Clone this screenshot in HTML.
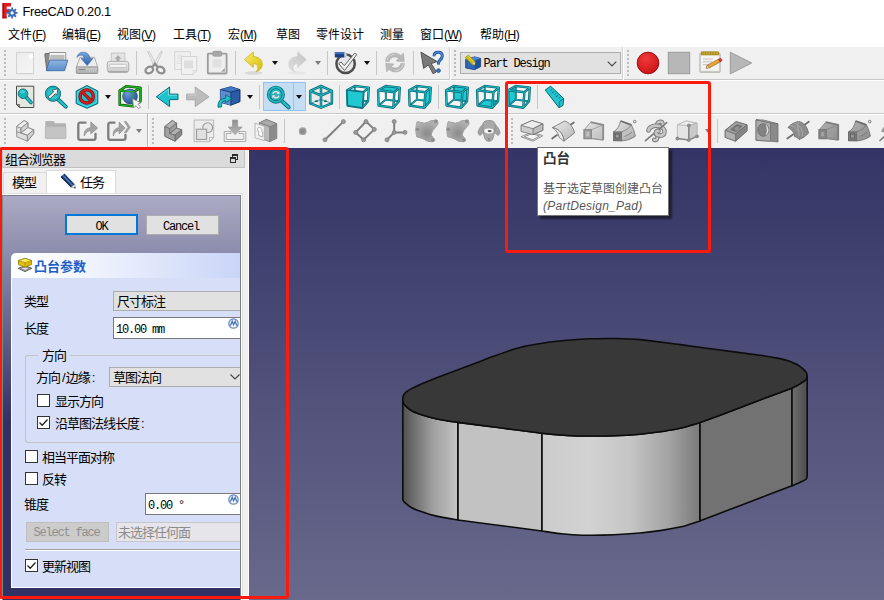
<!DOCTYPE html>
<html lang="zh-CN">
<head>
<meta charset="utf-8">
<title>FreeCAD 0.20.1</title>
<style>
*{box-sizing:border-box;margin:0;padding:0}
html,body{width:884px;height:600px;overflow:hidden;background:#f0f0f0}
body{position:relative;font-family:"Liberation Sans","Noto Sans CJK SC",sans-serif;font-size:12px;color:#000}
.abs{position:absolute}
#title{left:0;top:0;width:884px;height:24px;background:#fff}
#title .t{position:absolute;left:22.500px;top:4px;font-size:12.800px;line-height:16px;letter-spacing:-0.3px;white-space:nowrap}
#menu{left:0;top:24px;width:884px;height:22px;background:#fff}
#menu span{position:absolute;top:3px;font-size:12px;line-height:17px;white-space:nowrap}
#menu u{text-decoration:underline;text-underline-offset:1px}
#menu i{font-style:normal;letter-spacing:-0.5px}
.tbline{left:0;width:884px;height:1px}
.handle{position:absolute;width:2px;background-image:repeating-linear-gradient(to bottom,#bcbcbc 0,#bcbcbc 2px,transparent 2px,transparent 4px)}
.sep{position:absolute;width:1px;background:#c6c6c6}
.ic{position:absolute;overflow:visible}
.dd{position:absolute;width:0;height:0;border-left:3.8px solid transparent;border-right:3.8px solid transparent;border-top:4.3px solid #111}
.dd.g{border-top-color:#7a7a7a}
.mono{font-family:"Liberation Mono","Noto Sans CJK SC",monospace}
.cjk{font-family:"Liberation Sans","Noto Sans CJK SC",sans-serif}
#view{left:249px;top:148px;width:635px;height:452px;background:linear-gradient(to bottom,#343466 0%,#69698c 100%)}
#dockhead{left:3px;top:150px;width:242px;height:18px;background:#d9d9d9}
.lbl{position:absolute;font-size:12px;line-height:14px;white-space:nowrap;color:#000}
#dock .lbl{font-size:13px;letter-spacing:-1px}
.cb{position:absolute;width:13px;height:13px;background:#fff;border:1px solid #333}
.red{position:absolute;border:3px solid #fa1a0e;border-radius:3px;pointer-events:none}
</style>
</head>
<body>
<!-- title bar -->
<div id="title" class="abs">
<svg class="ic" style="left:2px;top:2px" width="18" height="18" viewBox="0 0 18 18">
<path d="M.500 1h8.500v3.600H4.700v2.600h3.500v3.300H4.700v5.800H.5z" fill="#e01b22"/>
<path d="M.500 1h1.500v15.300H.5z" fill="#9c1016"/>
<path d="M.500 14.800h4.200v1.500H.5z" fill="#b0141a"/>
<g fill="#3a6eb5"><circle cx="10.100" cy="10.900" r="3.700"/><path d="M9.200 5.400h1.800v11H9.200z"/><path d="M4.600 10h11v1.800h-11z"/><path d="M5.600 7.700l1.300-1.300 7.700 7.700-1.300 1.300z"/><path d="M13.300 6.400l1.300 1.300-7.700 7.700-1.300-1.300z"/></g>
<circle cx="10.100" cy="10.900" r="1.600" fill="#fff"/>
</svg>
<span class="t">FreeCAD 0.20.1</span>
</div>
<!-- menu bar -->
<div id="menu" class="abs">
<span style="left:8px">文件<i>(<u>F</u>)</i></span>
<span style="left:62px">编辑<i>(<u>E</u>)</i></span>
<span style="left:117px">视图<i>(<u>V</u>)</i></span>
<span style="left:173px">工具<i>(<u>T</u>)</i></span>
<span style="left:228px">宏<i>(<u>M</u>)</i></span>
<span style="left:276px">草图</span>
<span style="left:316px">零件设计</span>
<span style="left:380px">测量</span>
<span style="left:420px">窗口<i>(<u>W</u>)</i></span>
<span style="left:480px">帮助<i>(<u>H</u>)</i></span>
</div>
<!-- toolbar area -->
<div class="abs tbline" style="top:46px;background:#fff"></div>
<div class="abs tbline" style="top:79px;background:#c8c8c8"></div>
<div class="abs tbline" style="top:80px;background:#fff"></div>
<div class="abs tbline" style="top:113px;background:#c8c8c8"></div>
<div class="abs tbline" style="top:114px;background:#fff"></div>
<!-- toolbars -->
<div class="handle" style="left:4px;top:50px;height:26px"></div>
<div class="sep" style="left:136px;top:51px;height:24px"></div>
<div class="sep" style="left:235px;top:51px;height:24px"></div>
<div class="sep" style="left:327px;top:51px;height:24px"></div>
<div class="sep" style="left:376px;top:51px;height:24px"></div>
<div class="sep" style="left:413px;top:51px;height:24px"></div>
<div class="dd" style="left:272px;top:61px"></div>
<div class="dd g" style="left:315px;top:61px"></div>
<div class="dd" style="left:364px;top:61px"></div>
<div class="abs" style="left:449px;top:47px;width:1px;height:33px;background:#d0d0d0"></div><div class="abs" style="left:450px;top:47px;width:1px;height:33px;background:#fff"></div>
<div class="handle" style="left:454px;top:50px;height:26px"></div>
<div class="abs" style="left:460px;top:52px;width:161px;height:22px;background:#e1e1e1;border:1px solid #adadad"></div>
<svg class="ic" style="left:465px;top:55px" width="16" height="16" viewBox="0 0 16 16">
<path d="M.600 4.500l9-2.700 6 1.600v8.300L9.500 14.700.6 13z" fill="#2f67b5" stroke="#17386b" stroke-width=".7" stroke-linejoin="round"/>
<path d="M.600 4.500l9 1.300 6-2.400-6-1.600z" fill="#4b86d3"/>
<path d="M9.600 5.800v8.900l6-3V3.400z" fill="#1f4f96"/>
<path d="M.300 2.500L3.300 0l6.900 6.800-.4 2.900-2.900-.4z" fill="#e6cd1f" stroke="#8c7a08" stroke-width=".6"/><path d="M1.800 1.200l6.800 6.900M.9 2l6.800 6.900" stroke="#a8930c" stroke-width=".5"/>
<path d="M6.900 9.300l2.900.4.400-2.900z" fill="#f6f6f6" stroke="#8c7a08" stroke-width=".4"/>
</svg>
<span class="lbl mono" style="left:483.500px;top:57px;font-size:12px;letter-spacing:-1.2px;line-height:14px">Part Design</span>
<svg class="ic" style="left:607px;top:61px" width="10" height="6" viewBox="0 0 10 6"><path d="M.7.600l4.300 4.300L9.300.6" fill="none" stroke="#444" stroke-width="1.100"/></svg>
<div class="abs" style="left:622px;top:47px;width:1px;height:33px;background:#d0d0d0"></div><div class="abs" style="left:623px;top:47px;width:1px;height:33px;background:#fff"></div>
<div class="handle" style="left:627px;top:50px;height:26px"></div>
<svg class="ic" style="left:636px;top:51px" width="24" height="24" viewBox="0 0 24 24"><defs><radialGradient id="rc" cx=".4" cy=".3" r=".8"><stop offset="0" stop-color="#f03a3a"/><stop offset="1" stop-color="#c90f14"/></radialGradient></defs><circle cx="12" cy="12" r="10.800" fill="url(#rc)" stroke="#9c0c10" stroke-width="1"/></svg>
<svg class="ic" style="left:667px;top:51px" width="24" height="24" viewBox="0 0 24 24"><rect x="1.300" y="1.300" width="21.400" height="21.400" fill="#b7b7b7" stroke="#9a9a9a" stroke-width="1"/></svg>
<svg class="ic" style="left:698px;top:51px" width="24" height="24" viewBox="0 0 24 24">
<rect x="2" y="2.200" width="20" height="19.300" rx="1" fill="#f4f4f2" stroke="#9a9a96" stroke-width=".9"/>
<rect x="2" y="19.800" width="20" height="2" fill="#c9c9c4"/>
<rect x="3.200" y=".8" width="17.600" height="3.200" fill="#c8a62a" stroke="#8c741a" stroke-width=".5"/>
<path d="M5 .8v3.200M7.500.8v3.200M10 .8v3.200M12.500.8v3.200M15 .8v3.200M17.500.8v3.200" stroke="#8c741a" stroke-width=".5"/>
<path d="M5 8h10M5 10.800h9M5 13.600h6" stroke="#bdbdbd" stroke-width=".9"/>
<path d="M8.200 17.200l1.200-3.200 11-5.800 1.900 2.700-10.800 5.900z" fill="#e9a13a" stroke="#9a5f14" stroke-width=".6" stroke-linejoin="round"/>
<path d="M20.400 8.200l1.900 2.700 1.300-.8c.5-.3.500-.9.200-1.400l-.6-.9c-.3-.5-.9-.6-1.400-.3z" fill="#d9383a" stroke="#8c1a1a" stroke-width=".5"/>
<path d="M8.200 17.200l1.200-3.200 2.100 2.800z" fill="#e8d2a8" stroke="#7a5a2a" stroke-width=".4"/>
</svg>
<svg class="ic" style="left:729px;top:51px" width="24" height="24" viewBox="0 0 24 24"><path d="M1.300 1.200L22.600 12 1.300 22.800z" fill="#b7b7b7" stroke="#9a9a9a" stroke-width="1" stroke-linejoin="round"/></svg>
<svg class="ic" style="left:13px;top:51px" width="24" height="24" viewBox="0 0 24 24"><defs><linearGradient id="nd" x1="0" y1="0" x2="1" y2="1"><stop offset="0" stop-color="#ececec"/><stop offset="1" stop-color="#f6f6f6"/></linearGradient></defs>
<rect x="3.5" y="22" width="17" height="1.200" fill="#c9c9c9"/>
<rect x="3.500" y="1.500" width="17" height="21" fill="url(#nd)" stroke="#d2d2d2"/>
<circle cx="18" cy="5.500" r="2.200" fill="#fff"/></svg>
<svg class="ic" style="left:44px;top:51px" width="24" height="24" viewBox="0 0 24 24"><defs><linearGradient id="of" x1="0" y1="0" x2="0" y2="1"><stop offset="0" stop-color="#8fb5e0"/><stop offset="1" stop-color="#5b8ecb"/></linearGradient></defs>
<path d="M.800 3.500c0-.700.400-1 1-1h3.500l.800 1v16H2.800z" fill="#8a8a8a" stroke="#5c5c5c" stroke-width=".8"/>
<path d="M5.300 1.500h16.400v11H4.500z" fill="#fdfdfd" stroke="#7a7a7a" stroke-width=".8"/>
<path d="M6.500 4h14v5h-15z" fill="#bdbdbd"/>
<path d="M7 3.200h13" stroke="#e8e8e8" stroke-width="1"/>
<path d="M5.600 9.200h18.200l-3.200 10.500H2.300z" fill="url(#of)" stroke="#3f70ad" stroke-width=".9" stroke-linejoin="round"/></svg>
<svg class="ic" style="left:75px;top:51px" width="24" height="24" viewBox="0 0 24 24"><defs><linearGradient id="sv" x1="0" y1="0" x2="0" y2="1"><stop offset="0" stop-color="#d0d0d0"/><stop offset="1" stop-color="#a9a9a9"/></linearGradient>
<linearGradient id="sa" x1="0" y1="0" x2="0" y2="1"><stop offset="0" stop-color="#79a7dc"/><stop offset="1" stop-color="#2a61ad"/></linearGradient></defs>
<path d="M5 6.300h14.400l3.400 9.800H1.300z" fill="#ededed" stroke="#a5a5a5" stroke-width=".9" stroke-linejoin="round"/>
<rect x="1.300" y="16" width="21.500" height="6.500" rx="1" fill="url(#sv)" stroke="#8f8f8f" stroke-width=".9"/>
<path d="M3.500 18.500h7" stroke="#8a8a8a" stroke-width="1.300"/>
<path d="M14.500 17.500v3.500M16.500 17.500v3.500M18.500 17.500v3.500M20.500 17.500v3.500" stroke="#c4c4c4" stroke-width=".9"/>
<path d="M2 6.500C2.500 2.500 6 .700 9.500 1.300c3.500.600 5.300 3.300 5.600 6.200H18L12.200 14.600 6 7.500h3.300C9 5.600 8 4.300 6.200 4.200 4.500 4.100 3 5 2 6.500z" fill="url(#sa)" stroke="#2c5fa5" stroke-width=".5" stroke-linejoin="round"/></svg>
<svg class="ic" style="left:106px;top:51px" width="24" height="24" viewBox="0 0 24 24"><defs><linearGradient id="pr" x1="0" y1="0" x2="0" y2="1"><stop offset="0" stop-color="#ededed"/><stop offset="1" stop-color="#c9c9c9"/></linearGradient></defs>
<rect x="5.300" y="2" width="13.600" height="9.500" fill="#e4e4e4" stroke="#c4c4c4" stroke-width=".9"/>
<path d="M12 4.200l3.400 3.600h-1.900v3h-3v-3H8.600z" fill="#a9a9a9"/>
<rect x="1.300" y="10.300" width="21.500" height="11" rx="2.600" fill="url(#pr)" stroke="#a8a8a8" stroke-width=".9"/>
<rect x="3.500" y="13.300" width="17" height="3.200" rx="1.200" fill="#f4f4f4" stroke="#b5b5b5" stroke-width=".7"/>
<path d="M2.500 20.800h19" stroke="#a0a0a0" stroke-width="1.200"/></svg>
<svg class="ic" style="left:143px;top:51px" width="24" height="24" viewBox="0 0 24 24"><path d="M4.600.500L6.200.500 13.500 13.800 11.200 15.200z" fill="#ececec" stroke="#bdbdbd" stroke-width=".7"/>
<path d="M19.400.500L17.800.500 10.500 13.800 12.800 15.200z" fill="#ececec" stroke="#bdbdbd" stroke-width=".7"/>
<ellipse cx="6.300" cy="19" rx="4" ry="3.100" transform="rotate(-28 6.300 19)" fill="none" stroke="#8f8f8f" stroke-width="2.300"/>
<ellipse cx="17.700" cy="19" rx="4" ry="3.100" transform="rotate(28 17.700 19)" fill="none" stroke="#8f8f8f" stroke-width="2.300"/>
<path d="M9.300 16l2.700-3.500 2.700 3.500" fill="none" stroke="#8f8f8f" stroke-width="2.200"/></svg>
<svg class="ic" style="left:174px;top:51px" width="24" height="24" viewBox="0 0 24 24"><rect x=".700" y=".700" width="15.600" height="17.800" fill="#efefef" stroke="#d3d3d3" stroke-width=".9"/>
<path d="M3 5h6M3 7.500h5M3 10h5M3 12.500h5" stroke="#dcdcdc" stroke-width=".9"/>
<path d="M7.500 5.500h15.300v14.200l-3.800 3.800H7.500z" fill="#f1f1f1" stroke="#cfcfcf" stroke-width=".9"/>
<path d="M10 9.500h9v8h-9z" fill="#dedede"/>
<path d="M22.800 19.700h-3.800v3.800z" fill="#fbfbfb" stroke="#c9c9c9" stroke-width=".7"/></svg>
<svg class="ic" style="left:205px;top:51px" width="24" height="24" viewBox="0 0 24 24"><rect x="2.800" y="2.700" width="18.800" height="19.800" rx=".8" fill="#ececec" stroke="#9d9d9d" stroke-width="1.800"/>
<rect x="5.500" y="5.500" width="13.400" height="14.500" fill="#efefef"/>
<path d="M7.500 8h9v8.500h-9z" fill="#e1e1e1"/>
<rect x="7.800" y=".3" width="8.800" height="5" rx="1.200" fill="#a9a9a9" stroke="#8f8f8f" stroke-width=".6"/>
<rect x="10" y="0" width="4.400" height="1.600" rx=".8" fill="#9a9a9a"/>
<path d="M19.800 17v3.800H16z" fill="#a4a4a4"/></svg>
<svg class="ic" style="left:241px;top:51px" width="24" height="24" viewBox="0 0 24 24"><defs><linearGradient id="un" x1="0" y1="0" x2="1" y2="1"><stop offset="0" stop-color="#f7ec72"/><stop offset="1" stop-color="#d9bd00"/></linearGradient></defs>
<ellipse cx="12.500" cy="22" rx="9" ry="1.800" fill="#d9d9d9"/>
<path d="M3.500 8.600L12.300.900v4.600c5.200.200 8.900 3.300 8.900 7.800 0 3.700-2.800 6.700-6.300 7.500 1.600-1.400 2.300-3 2-4.800-.400-2.200-2.100-3.400-4.600-3.500v4z" fill="url(#un)" stroke="#c9ae00" stroke-width=".7" stroke-linejoin="round"/></svg>
<svg class="ic" style="left:285px;top:51px" width="24" height="24" viewBox="0 0 24 24"><defs><linearGradient id="re" x1="1" y1="0" x2="0" y2="1"><stop offset="0" stop-color="#c4c4c4"/><stop offset="1" stop-color="#dedede"/></linearGradient></defs>
<ellipse cx="11.500" cy="22" rx="9" ry="1.600" fill="#e6e6e6"/>
<path d="M21.500 8.600L12.700.900v4.600C7.500 5.700 3.800 8.800 3.800 13.300c0 3.700 2.800 6.700 6.300 7.500-1.600-1.400-2.300-3-2-4.800.400-2.200 2.100-3.400 4.600-3.500v4z" fill="url(#re)" stroke="#cdcdcd" stroke-width=".6" stroke-linejoin="round"/></svg>
<svg class="ic" style="left:334px;top:51px" width="25" height="24" viewBox="0 0 25 24"><circle cx="11.600" cy="12.800" r="9.200" fill="#e6e6e6" stroke="#4d4d4d" stroke-width="2.500"/>
<path d="M4.800 12.600l2.300-1.600 3.200 3.700L20.600 2.200l2.200 1.300L10.500 19.500z" fill="#f2f2f2" stroke="#555" stroke-width=".9" stroke-linejoin="round"/>
<path d="M.800 1.200h9.500l3.700 2.700-3.700 2.700H.800z" fill="#1c3f82"/>
<path d="M.800 2.400h9.800" stroke="#3d72c4" stroke-width="1.400"/>
<path d="M10.300 1.200l3.700 2.700-3.700 2.700z" fill="#d8dbe2"/>
<path d="M12.800 3l1.200.900-1.200.900z" fill="#222"/></svg>
<svg class="ic" style="left:383px;top:51px" width="24" height="24" viewBox="0 0 24 24"><g fill="#b9b9b9" stroke="#a9a9a9" stroke-width=".5" stroke-linejoin="round">
<path d="M2.500 10.500C2.800 5.500 6.500 2 11.500 2c2.600 0 4.800 1 6.400 2.600L20.500 2l.8 8.800-8.300-.8 2.600-2.600C14.500 6.500 13.100 6 11.600 6 8.800 6 6.800 7.900 6.300 10.500z"/>
<path d="M21.500 12.500c-.3 5-4 8.500-9 8.500-2.600 0-4.800-1-6.400-2.600L3.500 21l-.8-8.800 8.300.8-2.600 2.600c1.100.9 2.500 1.400 4 1.400 2.800 0 4.800-1.900 5.300-4.500z"/></g>
<path d="M4 9.500C5 5.500 8 3.500 11.500 3.500M20 13.500c-1 4-4 6-7.500 6" fill="none" stroke="#d6d6d6" stroke-width="1"/></svg>
<svg class="ic" style="left:420px;top:51px" width="24" height="24" viewBox="0 0 24 24"><path d="M.900 1.100L3.600 17.400 8.400 14 13.100 22.800 16.500 20.800 11.100 12.600 17.200 10.600z" fill="#7a7a7a" stroke="#4a4a4a" stroke-width=".9" stroke-linejoin="round"/>
<path d="M14 5.200C14 2.600 15.800 1.300 18.200 1.300s4.100 1.500 4.100 3.800c0 1.900-1 2.900-2.200 3.900-1.100.900-1.600 1.600-1.600 3.100v1.500" fill="none" stroke="#20529c" stroke-width="3"/>
<path d="M14 5.200C14 2.600 15.800 1.300 18.200 1.300s4.100 1.500 4.100 3.800c0 1.900-1 2.900-2.200 3.900-1.100.900-1.600 1.600-1.600 3.100v1.500" fill="none" stroke="#4a86d2" stroke-width="1.500"/>
<circle cx="18.500" cy="19.600" r="1.900" fill="#3b74c0" stroke="#1f4f96" stroke-width=".8"/></svg>
<div class="handle" style="left:4px;top:84px;height:26px"></div>
<div class="sep" style="left:148px;top:85px;height:24px"></div>
<div class="sep" style="left:259px;top:85px;height:24px"></div>
<div class="sep" style="left:339px;top:85px;height:24px"></div>
<div class="sep" style="left:438px;top:85px;height:24px"></div>
<div class="sep" style="left:537px;top:85px;height:24px"></div>
<div class="dd" style="left:105px;top:95px"></div>
<div class="dd" style="left:247px;top:95px"></div>
<div class="abs" style="left:263px;top:82px;width:43px;height:29px;background:#c5ddf3;border:1px solid #8fc4f4"></div><div class="abs" style="left:293px;top:83px;width:1px;height:27px;background:#8fc4f4"></div>
<div class="dd" style="left:296px;top:95px"></div>
<svg class="ic" style="left:13px;top:85px" width="24" height="24" viewBox="0 0 24 24"><path d="M3.500 1.200h17.300v21.300H6.500l-3-3z" fill="#e4e7e0" stroke="#3c3c3c" stroke-width=".9" stroke-linejoin="round"/>
<path d="M3.500 19.500h3v3z" fill="#8a8a8a" stroke="#3c3c3c" stroke-width=".6"/>
<path d="M13 12l5 5.500" stroke="#0a6973" stroke-width="3.600" stroke-linecap="round"/>
<path d="M13 12l5 5.500" stroke="#22c3cf" stroke-width="1.900" stroke-linecap="round"/>
<circle cx="10" cy="8.700" r="4.800" fill="#18b3bf" stroke="#0a6973" stroke-width=".9"/>
<ellipse cx="9.300" cy="6.800" rx="2.800" ry="1.700" fill="#5fd6de" opacity=".7"/></svg>
<svg class="ic" style="left:44px;top:85px" width="24" height="24" viewBox="0 0 24 24"><path d="M14.500 14.800l7.300 6.800" stroke="#0a6973" stroke-width="4" stroke-linecap="round"/>
<path d="M14.500 14.800l7.300 6.800" stroke="#22c3cf" stroke-width="2.200" stroke-linecap="round"/>
<circle cx="9" cy="8.700" r="7.600" fill="#2ac4ce" stroke="#0a6973" stroke-width="1"/>
<circle cx="9" cy="8.700" r="6.300" fill="none" stroke="#14a5b0" stroke-width="1"/>
<path d="M13.800 3.700L8 5.300l1.700 1.500-5.500 5 1.800 1.900 5.400-5 1.500 1.600z" fill="#f4f4f4" stroke="#444" stroke-width=".8" stroke-linejoin="round"/></svg>
<svg class="ic" style="left:75px;top:85px" width="24" height="24" viewBox="0 0 24 24"><path d="M12 .500l10.800 5.500v12.500L12 23.300 1.200 18.500V6z" fill="#1ac3d0" stroke="#0a6973" stroke-width="1" stroke-linejoin="round"/>
<path d="M12 2.200l9.300 4.700v10.700L12 21.700l-9.300-4.100V6.900z" fill="none" stroke="#6fe0e8" stroke-width=".7"/>
<circle cx="11.700" cy="11.400" r="6.600" fill="none" stroke="#8e0c0c" stroke-width="3.300"/>
<circle cx="11.700" cy="11.400" r="6.600" fill="none" stroke="#d61c1c" stroke-width="2.100"/>
<path d="M7.200 6.800l9.200 9.200" stroke="#8e0c0c" stroke-width="3.300"/>
<path d="M7.200 6.800l9.200 9.200" stroke="#d61c1c" stroke-width="2.100"/></svg>
<svg class="ic" style="left:118px;top:85px" width="25" height="24" viewBox="0 0 25 24"><defs><radialGradient id="bs" cx=".35" cy=".3" r=".8"><stop offset="0" stop-color="#6d9ad6"/><stop offset="1" stop-color="#1f4d92"/></radialGradient></defs>
<g fill="none" stroke="#0a5c0a" stroke-width="2.600" stroke-linejoin="round"><path d="M1.700 5.500L8.500 1.200l14 1.600v13.500l-7.500 5-13.300-1.500z"/><path d="M1.700 5.500l13.500 1.700 7.300-4.400M15.200 7.200v14"/></g>
<circle cx="12" cy="11.500" r="7.400" fill="url(#bs)" stroke="#173a70" stroke-width=".6"/>
<g fill="none" stroke="#1fb01f" stroke-width="1.300" stroke-linejoin="round"><path d="M1.700 5.500L8.500 1.200l14 1.600v13.500l-7.500 5-13.300-1.500z"/><path d="M1.700 5.500l13.500 1.700 7.300-4.400M15.200 7.200v14"/></g>
<path d="M14.600 13.800l1 9.200 2.300-2.300 2.800 3.100 2-1.700-2.800-3 3-1.200z" fill="#f6f6f6" stroke="#8a8a8a" stroke-width=".8" stroke-linejoin="round"/></svg>
<svg class="ic" style="left:155px;top:85px" width="24" height="24" viewBox="0 0 24 24"><path d="M1.300 11.800L14.600 2v7.100h8.400v5.500h-8.400v7z" fill="#20c2ce" stroke="#0a6973" stroke-width="1" stroke-linejoin="round"/>
<path d="M3.500 11.500L13.500 4.200v6h8.500" fill="none" stroke="#7fe3ea" stroke-width=".8"/></svg>
<svg class="ic" style="left:186px;top:85px" width="24" height="24" viewBox="0 0 24 24"><path d="M23.100 11.800L9.200 2v7.100H.7v5.700h8.500v6.800z" fill="#bcbcbc" stroke="#a3a3a3" stroke-width=".9" stroke-linejoin="round"/>
<path d="M1.500 10h8.500V4" fill="none" stroke="#d4d4d4" stroke-width=".8"/></svg>
<svg class="ic" style="left:217px;top:85px" width="24" height="24" viewBox="0 0 24 24"><path d="M3.400 4.600L13.900 1.700 23 4.600v12.100l-9.100 3.500-10.500-2.900z" fill="#2a5ba6" stroke="#132c58" stroke-width=".9" stroke-linejoin="round"/>
<path d="M3.400 4.600l10.500 2.600v13l-10.500-2.900z" fill="#5b8dd0"/>
<path d="M3.400 4.600L13.900 1.700 23 4.600l-9.100 2.600z" fill="#3d77c2"/>
<path d="M3.400 4.600l10.500 2.600L23 4.600M13.900 7.200v13" fill="none" stroke="#132c58" stroke-width=".8"/>
<path d="M1 22.200C.8 16.500 3 13.600 8.700 13.300V9.700l5.300 3.300 .2 1-5.500 3.700v-2.100C5.700 15.700 4.400 17.200 4.600 22z" fill="#1fc0cc" stroke="#0a6a74" stroke-width=".9" stroke-linejoin="round"/></svg>
<svg class="ic" style="left:266px;top:85px" width="24" height="24" viewBox="0 0 24 24"><path d="M15.800 16l6.800 6.300" stroke="#0a6973" stroke-width="4" stroke-linecap="round"/>
<path d="M15.800 16l6.800 6.300" stroke="#22c3cf" stroke-width="2.200" stroke-linecap="round"/>
<circle cx="9.900" cy="9.700" r="7.300" fill="#27bcc8" stroke="#0a6973" stroke-width="3.400"/>
<circle cx="9.900" cy="9.700" r="7.300" fill="none" stroke="#1dbdc9" stroke-width="1.700"/>
<path d="M5.800 9c.4-2 2-3.300 4-3.300 1 0 1.900.3 2.600 1l1.200-1.100.2 3.900-3.800-.2 1.200-1.200c-.4-.3-.9-.5-1.400-.5-1.100 0-2 .6-2.300 1.600z" fill="#f2f2f2" stroke="#0d7d88" stroke-width=".4"/>
<path d="M14 10.400c-.4 2-2 3.300-4 3.300-1 0-1.900-.3-2.600-1l-1.200 1.100-.2-3.900 3.800.2-1.200 1.200c.4.300.9.500 1.400.5 1.100 0 2-.6 2.300-1.600z" fill="#f2f2f2" stroke="#0d7d88" stroke-width=".4"/></svg>
<svg class="ic" style="left:309px;top:85px" width="24" height="24" viewBox="0 0 24 24"><path d="M12 1l10.900 4.900v12.500L12 22.700 1.200 18.400V5.900z" fill="#eaeaea"/>
<g fill="none" stroke="#0a6973" stroke-width="2.500" stroke-linejoin="round"><path d="M12 1l10.900 4.900v12.500L12 22.700 1.200 18.400V5.900z"/><path d="M1.200 5.900L12 10.500l10.900-4.600M12 1v21.700"/></g>
<g fill="none" stroke="#22c3cf" stroke-width="1" stroke-linejoin="round"><path d="M12 1l10.900 4.900v12.500L12 22.700 1.200 18.400V5.900z"/><path d="M1.200 5.900L12 10.500l10.900-4.600M12 1v21.700"/></g>
<g fill="none" stroke="#0a6973" stroke-width="1.100"><path d="M1.200 18.400l10.800-4 10.900 4" opacity=".55"/></g>
<ellipse cx="7.500" cy="16.200" rx="1.600" ry=".9" fill="#0a6973"/><ellipse cx="16.500" cy="16.200" rx="1.600" ry=".9" fill="#0a6973"/></svg>
<svg class="ic" style="left:346px;top:85px" width="24" height="24" viewBox="0 0 24 24"><path d="M1.1 5.3 L8.7 1.0 L22.8 2.6 L22.0 16.2 L16.3 22.7 L1.6 20.5z" fill="#f7f7f7"/><path d="M8.7 1.0L8.9 14.6L22.0 16.2M8.9 14.6L1.6 20.5" fill="none" stroke="#0a6973" stroke-width="1.900"/><path d="M8.7 1.0L8.9 14.6L22.0 16.2M8.9 14.6L1.6 20.5" fill="none" stroke="#22c3cf" stroke-width=".7"/><path d="M1.1 5.3 L17.4 7.2 L16.3 22.7 L1.6 20.5z" fill="#20c8d2"/><g fill="none" stroke="#0a6973" stroke-width="2.400" stroke-linejoin="round"><path d="M1.1 5.3 L8.7 1.0 L22.8 2.6 L22.0 16.2 L16.3 22.7 L1.6 20.5z"/><path d="M1.1 5.3L17.4 7.2L22.8 2.6M17.4 7.2L16.3 22.7"/></g><g fill="none" stroke="#22c3cf" stroke-width=".9" stroke-linejoin="round"><path d="M1.1 5.3 L8.7 1.0 L22.8 2.6 L22.0 16.2 L16.3 22.7 L1.6 20.5z"/><path d="M1.1 5.3L17.4 7.2L22.8 2.6M17.4 7.2L16.3 22.7"/></g><path d="M1.1 5.3 L17.4 7.2 L16.3 22.7 L1.6 20.5z" fill="#20c8d2" stroke="#0a6973" stroke-width="1"/></svg>
<svg class="ic" style="left:377px;top:85px" width="24" height="24" viewBox="0 0 24 24"><path d="M1.1 5.3 L8.7 1.0 L22.8 2.6 L22.0 16.2 L16.3 22.7 L1.6 20.5z" fill="#f7f7f7"/><path d="M8.7 1.0L8.9 14.6L22.0 16.2M8.9 14.6L1.6 20.5" fill="none" stroke="#0a6973" stroke-width="1.900"/><path d="M8.7 1.0L8.9 14.6L22.0 16.2M8.9 14.6L1.6 20.5" fill="none" stroke="#22c3cf" stroke-width=".7"/><path d="M1.1 5.3 L8.7 1.0 L22.8 2.6 L17.4 7.2z" fill="#20c8d2"/><g fill="none" stroke="#0a6973" stroke-width="2.400" stroke-linejoin="round"><path d="M1.1 5.3 L8.7 1.0 L22.8 2.6 L22.0 16.2 L16.3 22.7 L1.6 20.5z"/><path d="M1.1 5.3L17.4 7.2L22.8 2.6M17.4 7.2L16.3 22.7"/></g><g fill="none" stroke="#22c3cf" stroke-width=".9" stroke-linejoin="round"><path d="M1.1 5.3 L8.7 1.0 L22.8 2.6 L22.0 16.2 L16.3 22.7 L1.6 20.5z"/><path d="M1.1 5.3L17.4 7.2L22.8 2.6M17.4 7.2L16.3 22.7"/></g></svg>
<svg class="ic" style="left:408px;top:85px" width="24" height="24" viewBox="0 0 24 24"><path d="M1.1 5.3 L8.7 1.0 L22.8 2.6 L22.0 16.2 L16.3 22.7 L1.6 20.5z" fill="#f7f7f7"/><path d="M8.7 1.0L8.9 14.6L22.0 16.2M8.9 14.6L1.6 20.5" fill="none" stroke="#0a6973" stroke-width="1.900"/><path d="M8.7 1.0L8.9 14.6L22.0 16.2M8.9 14.6L1.6 20.5" fill="none" stroke="#22c3cf" stroke-width=".7"/><path d="M17.4 7.2 L22.8 2.6 L22.0 16.2 L16.3 22.7z" fill="#20c8d2"/><g fill="none" stroke="#0a6973" stroke-width="2.400" stroke-linejoin="round"><path d="M1.1 5.3 L8.7 1.0 L22.8 2.6 L22.0 16.2 L16.3 22.7 L1.6 20.5z"/><path d="M1.1 5.3L17.4 7.2L22.8 2.6M17.4 7.2L16.3 22.7"/></g><g fill="none" stroke="#22c3cf" stroke-width=".9" stroke-linejoin="round"><path d="M1.1 5.3 L8.7 1.0 L22.8 2.6 L22.0 16.2 L16.3 22.7 L1.6 20.5z"/><path d="M1.1 5.3L17.4 7.2L22.8 2.6M17.4 7.2L16.3 22.7"/></g></svg>
<svg class="ic" style="left:445px;top:85px" width="24" height="24" viewBox="0 0 24 24"><path d="M1.1 5.3 L8.7 1.0 L22.8 2.6 L22.0 16.2 L16.3 22.7 L1.6 20.5z" fill="#f7f7f7"/><path d="M8.7 1.0 L22.8 2.6 L22.0 16.2 L8.9 14.6z" fill="#20c8d2"/><path d="M8.7 1.0L8.9 14.6L22.0 16.2M8.9 14.6L1.6 20.5" fill="none" stroke="#0a6973" stroke-width="1.900"/><path d="M8.7 1.0L8.9 14.6L22.0 16.2M8.9 14.6L1.6 20.5" fill="none" stroke="#22c3cf" stroke-width=".7"/><g fill="none" stroke="#0a6973" stroke-width="2.400" stroke-linejoin="round"><path d="M1.1 5.3 L8.7 1.0 L22.8 2.6 L22.0 16.2 L16.3 22.7 L1.6 20.5z"/><path d="M1.1 5.3L17.4 7.2L22.8 2.6M17.4 7.2L16.3 22.7"/></g><g fill="none" stroke="#22c3cf" stroke-width=".9" stroke-linejoin="round"><path d="M1.1 5.3 L8.7 1.0 L22.8 2.6 L22.0 16.2 L16.3 22.7 L1.6 20.5z"/><path d="M1.1 5.3L17.4 7.2L22.8 2.6M17.4 7.2L16.3 22.7"/></g></svg>
<svg class="ic" style="left:476px;top:85px" width="24" height="24" viewBox="0 0 24 24"><path d="M1.1 5.3 L8.7 1.0 L22.8 2.6 L22.0 16.2 L16.3 22.7 L1.6 20.5z" fill="#f7f7f7"/><path d="M1.6 20.5 L16.3 22.7 L22.0 16.2 L8.9 14.6z" fill="#20c8d2"/><path d="M8.7 1.0L8.9 14.6L22.0 16.2M8.9 14.6L1.6 20.5" fill="none" stroke="#0a6973" stroke-width="1.900"/><path d="M8.7 1.0L8.9 14.6L22.0 16.2M8.9 14.6L1.6 20.5" fill="none" stroke="#22c3cf" stroke-width=".7"/><g fill="none" stroke="#0a6973" stroke-width="2.400" stroke-linejoin="round"><path d="M1.1 5.3 L8.7 1.0 L22.8 2.6 L22.0 16.2 L16.3 22.7 L1.6 20.5z"/><path d="M1.1 5.3L17.4 7.2L22.8 2.6M17.4 7.2L16.3 22.7"/></g><g fill="none" stroke="#22c3cf" stroke-width=".9" stroke-linejoin="round"><path d="M1.1 5.3 L8.7 1.0 L22.8 2.6 L22.0 16.2 L16.3 22.7 L1.6 20.5z"/><path d="M1.1 5.3L17.4 7.2L22.8 2.6M17.4 7.2L16.3 22.7"/></g></svg>
<svg class="ic" style="left:507px;top:85px" width="24" height="24" viewBox="0 0 24 24"><path d="M1.1 5.3 L8.7 1.0 L22.8 2.6 L22.0 16.2 L16.3 22.7 L1.6 20.5z" fill="#f7f7f7"/><path d="M1.1 5.3 L8.7 1.0 L8.9 14.6 L1.6 20.5z" fill="#20c8d2"/><path d="M8.7 1.0L8.9 14.6L22.0 16.2M8.9 14.6L1.6 20.5" fill="none" stroke="#0a6973" stroke-width="1.900"/><path d="M8.7 1.0L8.9 14.6L22.0 16.2M8.9 14.6L1.6 20.5" fill="none" stroke="#22c3cf" stroke-width=".7"/><g fill="none" stroke="#0a6973" stroke-width="2.400" stroke-linejoin="round"><path d="M1.1 5.3 L8.7 1.0 L22.8 2.6 L22.0 16.2 L16.3 22.7 L1.6 20.5z"/><path d="M1.1 5.3L17.4 7.2L22.8 2.6M17.4 7.2L16.3 22.7"/></g><g fill="none" stroke="#22c3cf" stroke-width=".9" stroke-linejoin="round"><path d="M1.1 5.3 L8.7 1.0 L22.8 2.6 L22.0 16.2 L16.3 22.7 L1.6 20.5z"/><path d="M1.1 5.3L17.4 7.2L22.8 2.6M17.4 7.2L16.3 22.7"/></g></svg>
<svg class="ic" style="left:543px;top:85px" width="24" height="24" viewBox="0 0 24 24"><path d="M2.200 5L7.600 1.200 20.700 13.500l-.7 6.900-4 2.300z" fill="#22c4d0" stroke="#0a6973" stroke-width="1" stroke-linejoin="round"/>
<path d="M16 22.700l.8-6.600 3.900-2.600" fill="none" stroke="#0a6973" stroke-width=".8"/>
<path d="M9.300 4.500l-1.700 1.200M11.300 6.400l-2.600 1.800M13.300 8.300l-1.700 1.200M15.300 10.200l-2.600 1.800M17.300 12.100l-1.700 1.200" stroke="#0a6973" stroke-width=".9"/></svg>
<div class="handle" style="left:4px;top:118px;height:26px"></div>
<div class="abs" style="left:147px;top:114px;width:1px;height:33px;background:#b4b4b4"></div><div class="abs" style="left:148px;top:114px;width:1px;height:33px;background:#fff"></div>
<div class="handle" style="left:152px;top:118px;height:26px"></div>
<div class="sep" style="left:284px;top:119px;height:24px"></div>
<div class="abs" style="left:507px;top:114px;width:1px;height:33px;background:#b4b4b4"></div><div class="abs" style="left:508px;top:114px;width:1px;height:33px;background:#fff"></div>
<div class="handle" style="left:511px;top:118px;height:26px"></div>
<div class="sep" style="left:717px;top:119px;height:24px"></div>
<div class="dd g" style="left:136px;top:129px"></div>
<div class="dd g" style="left:705px;top:129px"></div>
<svg class="ic" style="left:13px;top:119px" width="24" height="24" viewBox="0 0 24 24"><g stroke="#8a8a8a" stroke-width=".9" stroke-linejoin="round">
<path d="M3.700 7.500L11.100 1.500l3.800 2.200v4.900l5.800 2.200v3.800l-6.300 7.600L3.700 17.800z" fill="#dedede"/>
<path d="M3.700 7.500L11.100 1.500l3.800 2.200L7.900 9.100z" fill="#ededed"/>
<path d="M7.900 9.100l7-5.400v4.900l-7 5.400z" fill="#d2d2d2"/>
<path d="M7.900 14l7-5.400 5.800 2.200-6.300 5.400z" fill="#ededed"/>
<path d="M3.700 12.900l4.200 1.100 6.500 2.200v6M7.900 9.100V14M3.700 12.900" fill="none"/>
<path d="M14.400 16.200l6.300-5.400v3.800l-6.300 7.600z" fill="#cfcfcf"/>
</g></svg>
<svg class="ic" style="left:44px;top:119px" width="24" height="24" viewBox="0 0 24 24"><path d="M1.300 3.200c0-.800.500-1.200 1.200-1.200h6.500c.700 0 1.100.300 1.400 1l.6 1.300h9.800c.7 0 1.200.5 1.200 1.200v13c0 .7-.5 1.100-1.200 1.100H2.500c-.7 0-1.200-.4-1.200-1.100z" fill="#b2b2b2"/>
<path d="M1.300 8.500c0-.700.500-1.100 1.200-1.100h18.300c.7 0 1.200.4 1.200 1.100v10c0 .7-.5 1.100-1.200 1.100H2.500c-.7 0-1.200-.4-1.200-1.100z" fill="#c3c3c3" stroke="#b0b0b0" stroke-width=".6"/></svg>
<svg class="ic" style="left:75px;top:119px" width="24" height="24" viewBox="0 0 24 24"><path d="M10.500 3.700H5.200C3.900 3.700 3.300 4.400 3.300 5.600v13.400c0 1.200.6 1.900 1.900 1.900h13.400c1.300 0 1.900-.7 1.900-1.900V14.800" fill="none" stroke="#7c7c7c" stroke-width="2.300" stroke-linecap="round"/><path d="M9.300 17c-.4-5 1.700-8 6.500-8.300V3l6.300 5.500.1 1-6.400 5.300v-3c-3.200.1-5.200 1.500-6.500 5.200z" fill="#a3a3a3" stroke="#8a8a8a" stroke-width=".7" stroke-linejoin="round"/></svg>
<svg class="ic" style="left:105px;top:119px" width="26" height="24" viewBox="0 0 26 24"><path d="M9.500 3.700H5.200C3.900 3.700 3.300 4.400 3.300 5.600v13.400c0 1.200.6 1.900 1.900 1.900h13.400c1.300 0 1.900-.7 1.900-1.900V15.800" fill="none" stroke="#7c7c7c" stroke-width="2.300" stroke-linecap="round"/><path d="M8.300 17c-.4-5 1.500-8 5.800-8.300V3.200l5.600 5.300.1 1-5.700 5.300v-3c-2.900.1-4.600 1.500-5.800 5.200z" fill="#a3a3a3" stroke="#8a8a8a" stroke-width=".7" stroke-linejoin="round"/><path d="M19.300 2.600h2l3.900 5.600-3.900 5.600h-2l3.700-5.600z" fill="#a3a3a3" stroke="#8a8a8a" stroke-width=".6" stroke-linejoin="round"/></svg>
<svg class="ic" style="left:161px;top:119px" width="24" height="24" viewBox="0 0 24 24"><g stroke="#6c6c6c" stroke-width=".8" stroke-linejoin="round">
<path d="M3.900 7.500L11.300 1.500l4.300 2.700v4.900l5.100 1.700v4.900L14 22.200 3.900 17.300z" fill="#8e8e8e"/>
<path d="M3.900 7.500L11.300 1.500l4.300 2.700-7 5.500z" fill="#b4b4b4"/>
<path d="M8.600 9.700l7-5.500v4.900l-7 5.500z" fill="#9c9c9c"/>
<path d="M8.600 14.600l7-5.500 5.100 1.700-6.700 5.400z" fill="#b0b0b0"/>
<path d="M14 16.200l6.700-5.400v4.900L14 22.200z" fill="#8a8a8a"/>
<path d="M3.900 7.500l4.700 2.200v4.900l5.400 1.600v6L3.900 17.300z" fill="#a2a2a2"/>
</g></svg>
<svg class="ic" style="left:192px;top:119px" width="24" height="24" viewBox="0 0 24 24"><path d="M2.100 1h19.600v17.500l-4.200 4.200H2.100z" fill="#ececec" stroke="#b2b2b2" stroke-width=".9" stroke-linejoin="round"/>
<path d="M21.700 18.500h-4.200v4.200z" fill="#fafafa" stroke="#a5a5a5" stroke-width=".7" stroke-linejoin="round"/>
<circle cx="15.700" cy="8.600" r="4.900" fill="#e6e6e6" stroke="#9b9b9b" stroke-width="1.100"/>
<rect x="4.500" y="10.200" width="10.100" height="10.300" fill="#e0e0e0" stroke="#9b9b9b" stroke-width="1.100"/></svg>
<svg class="ic" style="left:223px;top:119px" width="24" height="24" viewBox="0 0 24 24"><defs><linearGradient id="im" x1="0" y1="0" x2="0" y2="1"><stop offset="0" stop-color="#8f8f8f"/><stop offset="1" stop-color="#b8b8b8"/></linearGradient></defs>
<path d="M1.200 12.500h6.800v2H3.200v6h17.600v-6H16v-2h6.800v10H1.200z" fill="#f7f7f7" stroke="#a2a2a2" stroke-width=".9" stroke-linejoin="round"/>
<path d="M9.500 1h5.100v7h4.600L12 15.700 5.200 8h4.300z" fill="url(#im)" stroke="#9a9a9a" stroke-width=".7" stroke-linejoin="round"/></svg>
<svg class="ic" style="left:254px;top:119px" width="24" height="24" viewBox="0 0 24 24"><g stroke="#777" stroke-width=".7" stroke-linejoin="round">
<path d="M5.500 3.800L12.400.400l10.400 4.400v14.700l-7.100 3.200z" fill="#8c8c8c"/>
<path d="M5.500 3.800L12.400.400l10.400 4.400-7.100 3z" fill="#a9a9a9"/>
<path d="M5.500 3.800l10.200 4v14.900L5.500 19z" fill="#b9b9b9"/>
</g>
<path d="M1 4.200l9.300 3v14.400L1 18.700z" fill="#f2f2f2" stroke="#a8a8a8" stroke-width=".8" stroke-linejoin="round"/>
<path d="M3.500 10.500c0-1.500 1-2.300 2.200-2 1.300.3 2.200 1.500 2.200 3l-.1 1.200.9.300v4.800l-4-1.200v-4.600l-1.200-.4z" fill="#fff" stroke="#9a9a9a" stroke-width=".8"/></svg>
<svg class="ic" style="left:291px;top:119px" width="24" height="24" viewBox="0 0 24 24"><circle cx="11.700" cy="12.200" r="3.300" fill="#8d8d8d" stroke="#a5a5a5" stroke-width="1.200"/></svg>
<svg class="ic" style="left:322px;top:119px" width="24" height="24" viewBox="0 0 24 24"><path d="M3 20.800L21.400 2.600" stroke="#7f7f7f" stroke-width="2"/><circle cx="3" cy="20.800" r="2" fill="#9a9a9a" stroke="#7f7f7f" stroke-width=".8"/><circle cx="21.400" cy="2.600" r="2" fill="#9a9a9a" stroke="#7f7f7f" stroke-width=".8"/></svg>
<svg class="ic" style="left:353px;top:119px" width="24" height="24" viewBox="0 0 24 24"><path d="M13 2.500l8.300 7.900L10.600 20.800 2.700 13.400z" fill="none" stroke="#7f7f7f" stroke-width="2" stroke-linejoin="round"/><circle cx="13" cy="2.5" r="2" fill="#9a9a9a" stroke="#7f7f7f" stroke-width=".8"/><circle cx="21.3" cy="10.4" r="2" fill="#9a9a9a" stroke="#7f7f7f" stroke-width=".8"/><circle cx="10.6" cy="20.8" r="2" fill="#9a9a9a" stroke="#7f7f7f" stroke-width=".8"/><circle cx="2.7" cy="13.4" r="2" fill="#9a9a9a" stroke="#7f7f7f" stroke-width=".8"/></svg>
<svg class="ic" style="left:384px;top:119px" width="24" height="24" viewBox="0 0 24 24"><path d="M10.200 13.400V2.500M10.200 13.400H21M10.200 13.400L3 20.800" stroke="#7f7f7f" stroke-width="2" fill="none"/><circle cx="10.2" cy="2.5" r="2" fill="#9a9a9a" stroke="#7f7f7f" stroke-width=".8"/><circle cx="21" cy="13.4" r="2" fill="#9a9a9a" stroke="#7f7f7f" stroke-width=".8"/><circle cx="3" cy="20.8" r="2" fill="#9a9a9a" stroke="#7f7f7f" stroke-width=".8"/><circle cx="10.2" cy="13.4" r="2" fill="#9a9a9a" stroke="#7f7f7f" stroke-width=".8"/></svg>
<svg class="ic" style="left:415px;top:119px" width="24" height="24" viewBox="0 0 24 24"><defs><radialGradient id="bl1" cx=".5" cy=".6" r=".6"><stop offset="0" stop-color="#8b8b8b"/><stop offset="1" stop-color="#b4b4b4"/></radialGradient></defs>
<path d="M2.200 2.600Q5.500 3.200 9.300 4.200Q13 3.500 16.300 1.500L22.300 1.500Q23.300 3 22.900 5.300Q20.500 8.500 18 11.300Q16.300 13.800 16.300 16.200Q18 18.500 19.600 20.500Q19.700 22.100 18 22.700Q15 22.900 12.500 22.200Q9.500 20.500 7.100 19.400Q4 18.300 1.700 17.800Q.800 14 .800 10.200Q1 6 2.200 2.600z" fill="url(#bl1)" stroke="#9d9d9d" stroke-width=".9"/>
<rect x="19.100" y=".8" width="3.400" height="3.400" rx=".7" fill="#8a8a8a" stroke="#a8a8a8" stroke-width=".6"/>
<circle cx="2.500" cy="10.300" r="1.900" fill="#8a8a8a" stroke="#a8a8a8" stroke-width=".6"/>
<circle cx="17.700" cy="20.900" r="1.900" fill="#8a8a8a" stroke="#a8a8a8" stroke-width=".6"/></svg>
<svg class="ic" style="left:446px;top:119px" width="24" height="24" viewBox="0 0 24 24"><defs><radialGradient id="bl2" cx=".5" cy=".6" r=".6"><stop offset="0" stop-color="#8b8b8b"/><stop offset="1" stop-color="#b4b4b4"/></radialGradient></defs>
<path d="M2.200 2.600Q5.500 3.200 9.300 4.200Q13 3.500 16.300 1.500L22.300 1.500Q23.300 3 22.900 5.300Q20.500 8.500 18 11.300Q16.300 13.800 16.300 16.200Q18 18.500 19.600 20.500Q19.700 22.100 18 22.700Q15 22.900 12.500 22.200Q9.500 20.500 7.100 19.400Q4 18.300 1.700 17.800Q.800 14 .800 10.200Q1 6 2.200 2.600z" fill="url(#bl2)" stroke="#9d9d9d" stroke-width=".9"/>
<rect x="19.100" y=".8" width="3.400" height="3.400" rx=".7" fill="#8a8a8a" stroke="#a8a8a8" stroke-width=".6"/>
<circle cx="2.500" cy="10.300" r="1.900" fill="#8a8a8a" stroke="#a8a8a8" stroke-width=".6"/>
<circle cx="17.700" cy="20.900" r="1.900" fill="#8a8a8a" stroke="#a8a8a8" stroke-width=".6"/></svg>
<svg class="ic" style="left:477px;top:119px" width="24" height="24" viewBox="0 0 24 24"><g stroke="#8b8b8b" stroke-width=".8" stroke-linejoin="round">
<path d="M6.300 5C3.500 7.500 1.500 10.500 1 13.500c.4 2 1.500 2.800 2.400 2.700C5.200 15 6.600 13 7.200 10.500z" fill="#a2a2a2"/>
<path d="M17.700 5c2.800 2.500 4.800 5.500 5.300 8.500-.4 2-1.500 2.800-2.400 2.700-1.800-1.200-3.200-3.200-3.800-5.700z" fill="#a2a2a2"/>
<path d="M6 5.500C5.800 2.800 8.800 1.200 11.900 1.500 15.200 1.200 18.200 2.800 18 5.500c.5 4-.5 9-1.800 13.400-.7 2.600-2.700 3.400-4.300 3.300-1.600.1-3.600-.7-4.300-3.300C6.300 14.500 5.500 9.500 6 5.500z" fill="#a9a9a9"/>
</g>
<ellipse cx="11.900" cy="12" rx="4.700" ry="2.400" fill="#f8f8f8"/>
<ellipse cx="12.700" cy="12.100" rx="2.100" ry="1.100" fill="#555"/>
<path d="M10.600 19.300c.8.500 1.800.5 2.600 0M11.900 19.600v2" stroke="#7a7a7a" stroke-width=".8" fill="none"/></svg>
<svg class="ic" style="left:520px;top:119px" width="24" height="24" viewBox="0 0 24 24"><g stroke="#7a7a7a" stroke-width=".8" stroke-linejoin="round">
<path d="M1 17.800L11.900 13.200 22.800 16.700 13 22.200z" fill="#f6f6f6"/>
<path d="M4.300 17.800L12 14.600 19.600 17 12.800 20.800z" fill="none"/>
</g>
<g stroke="#6e6e6e" stroke-width=".8" stroke-linejoin="round">
<path d="M1 6.400L11.900 1.500l10.900 3.300v6.500L13 15.700 1 12.400z" fill="#cdcdcd"/>
<path d="M1 6.400L11.900 1.500l10.900 3.300L13 9.700z" fill="#ececec"/>
<path d="M13 9.700l9.800-4.900v6.500L13 15.700z" fill="#bdbdbd"/>
</g></svg>
<svg class="ic" style="left:551px;top:119px" width="24" height="24" viewBox="0 0 24 24"><defs><linearGradient id="rv" x1="0" y1="0" x2="1" y2="1"><stop offset="0" stop-color="#ececec"/><stop offset="1" stop-color="#b4b4b4"/></linearGradient></defs>
<path d="M1.200 19.500L6 16M18.800 6.300L22.800 3.500" stroke="#6f6f6f" stroke-width="1.800" stroke-linecap="round"/>
<path d="M1.500 8.600L13.500 2.100C18 3 22.500 8 23.500 14L12.900 22.200C12.900 16 8 9.500 1.500 8.600z" fill="url(#rv)" stroke="#6e6e6e" stroke-width=".8" stroke-linejoin="round"/>
<path d="M1.500 8.600C8 9.500 12.900 16 12.900 22.200L8 18.300C8 15 5 11 1.500 8.600z" fill="#ebebeb" stroke="#6e6e6e" stroke-width=".8" stroke-linejoin="round"/></svg>
<svg class="ic" style="left:582px;top:119px" width="24" height="24" viewBox="0 0 24 24"><defs><linearGradient id="lf582" x1="0" y1="0" x2="1" y2="1"><stop offset="0" stop-color="#e4e4e4"/><stop offset="1" stop-color="#bdbdbd"/></linearGradient></defs>
<path d="M2.200 10.800L8.700 3.200l12.500 2.700v15.200L9.200 19.500H2.200z" fill="url(#lf582)" stroke="#8c8c8c" stroke-width=".8" stroke-linejoin="round"/>
<path d="M8.700 3.200l12.500 2.700v15.200" fill="none" stroke="#8c8c8c" stroke-width="1.800" stroke-linejoin="round"/>
<path d="M9.200 10.800L21.200 5.900M9.200 19.500l12 1.600" stroke="#8c8c8c" stroke-width=".7"/>
<rect x="2.200" y="10.800" width="7" height="8.700" fill="#a9a9a9" stroke="#8c8c8c" stroke-width="1.600"/>
<rect x="4.500" y="13.200" width="2.400" height="4" fill="#c4c4c4"/></svg>
<svg class="ic" style="left:612px;top:119px" width="24" height="24" viewBox="0 0 24 24"><defs><linearGradient id="sw612" x1="0" y1="0" x2="1" y2="1"><stop offset="0" stop-color="#e6e6e6"/><stop offset="1" stop-color="#a8a8a8"/></linearGradient></defs>
<path d="M1.500 12.900C5.500 10.500 7.500 7 8.600 2l10.800 3.900c2.200 4.400 3.200 7.300 4 11.300-4.400 3-8.600 4.300-13.600 4.700l-8.300-.2z" fill="url(#sw612)" stroke="#6f6f6f" stroke-width=".8" stroke-linejoin="round"/>
<path d="M8.600 2l10.800 3.900" stroke="#6f6f6f" stroke-width="1.800"/>
<path d="M9.700 12.900C14 11.500 17.500 9 19.400 5.900M12.500 17.500c3-1 5.500-2.500 7.500-4.500" fill="none" stroke="#6f6f6f" stroke-width=".7"/>
<rect x="1.500" y="12.900" width="8.200" height="8.800" fill="#777" stroke="#6f6f6f" stroke-width=".8"/>
<rect x="3.300" y="15.200" width="3.800" height="3.800" fill="#9a9a9a" stroke="#555" stroke-width=".6"/>
<circle cx="22.700" cy="2.600" r="1.300" fill="none" stroke="#6f6f6f" stroke-width=".9"/></svg>
<svg class="ic" style="left:644px;top:119px" width="24" height="24" viewBox="0 0 24 24"><path d="M1.500 21.600L22.700 3.700" stroke="#7d7d7d" stroke-width="1.700" stroke-linecap="round"/>
<g fill="none" stroke="#777" stroke-width="4.200" stroke-linecap="round"><path d="M13 5.500c1-3.500 6-4 5.500-.5"/><path d="M10 20.800c3 1.500 4.500-2.500 2.500-4.500"/></g>
<g fill="none" stroke="#c9c9c9" stroke-width="2.400" stroke-linecap="round"><path d="M13 5.500c1-3.500 6-4 5.500-.5"/><path d="M10 20.800c3 1.500 4.500-2.500 2.500-4.500"/></g>
<path d="M4.500 11.500C5 8 10 6 14.500 7c4 .9 6.500 3.500 6 6.500-.5 2.500-3 3.500-5.500 3-2.500-.5-3.500-2-3-3.500.3-1 1.500-1.300 2.500-1" fill="none" stroke="#777" stroke-width="4.600" stroke-linecap="round"/>
<path d="M4.500 11.500C5 8 10 6 14.500 7c4 .9 6.500 3.500 6 6.500-.5 2.500-3 3.500-5.500 3-2.500-.5-3.500-2-3-3.500.3-1 1.500-1.300 2.500-1" fill="none" stroke="#c6c6c6" stroke-width="2.800" stroke-linecap="round"/>
<path d="M15.800 9.500L19 6.800" stroke="#7d7d7d" stroke-width="1.700"/></svg>
<svg class="ic" style="left:675px;top:119px" width="24" height="24" viewBox="0 0 24 24"><g stroke="#b4b4b4" stroke-width=".8" stroke-linejoin="round">
<path d="M2.400 5.900L11.100 2l10.900 2.200v13.100l-8.200 3.800L2.400 19.500z" fill="#e4e4e4"/>
<path d="M2.400 5.900L11.100 2l10.900 2.200-8.200 2.200z" fill="#f0f0f0"/>
<path d="M13.800 6.400l8.200-2.200v13.100l-8.200 3.800z" fill="#c9c9c9"/>
</g>
<path d="M13.800 6.400v14.700M2.400 19.500l11.400 1.600 8.200-3.800" fill="none" stroke="#858585" stroke-width="1.500"/><circle cx="13.8" cy="6.4" r="1.900" fill="#8d8d8d"/><circle cx="2.4" cy="19.5" r="1.900" fill="#8d8d8d"/><circle cx="13.8" cy="21.1" r="1.900" fill="#8d8d8d"/><circle cx="22" cy="17.3" r="1.900" fill="#8d8d8d"/></svg>
<svg class="ic" style="left:724px;top:119px" width="24" height="24" viewBox="0 0 24 24"><g stroke="#6b6b6b" stroke-width=".8" stroke-linejoin="round">
<path d="M1.200 11.300L12.100 2.600 23 5.900v5.900L11.600 22.200 1.200 18.400z" fill="#9c9c9c"/>
<path d="M1.200 11.300L12.100 2.600 23 5.900 11.600 15.100z" fill="#a2a2a2"/>
<path d="M11.600 15.100L23 5.900v5.900L11.600 22.200z" fill="#858585"/>
<path d="M1.200 11.300l10.400 3.800v7.100L1.200 18.400z" fill="#b0b0b0"/>
<path d="M6.700 10.600l6.200-5 5.200 1.600-6.300 5.200z" fill="#767676"/>
<path d="M9.500 9.700l3.600-2.900 2.700.8v2.300l-3.300 2.800z" fill="#8f8f8f" stroke-width=".5"/>
</g></svg>
<svg class="ic" style="left:755px;top:119px" width="24" height="24" viewBox="0 0 24 24"><g stroke="#707070" stroke-width=".8" stroke-linejoin="round">
<path d="M1 .800l14.500 3 7.500 1v18.200l-7.500-.8L1 21.300z" fill="#8a8a8a"/>
<path d="M1 .800l14.500 3v18.400L1 21.300z" fill="#ababab"/>
<path d="M1 .800l7.500.2L23 4.800l-7.500-1z" fill="#b9b9b9"/>
</g>
<ellipse cx="8.300" cy="11" rx="5.600" ry="6.300" fill="#828282" stroke="#6a6a6a" stroke-width=".8"/>
<path d="M10.500 5.500c2.300 1.300 3 3.300 3 5.500s-.9 4.400-3 5.600c.9-1.700 1.300-3.500 1.300-5.600s-.4-3.800-1.300-5.500z" fill="#dcdcdc"/></svg>
<svg class="ic" style="left:786px;top:119px" width="24" height="24" viewBox="0 0 24 24"><path d="M1.300 19.500L7 15.500M17.500 6.500L22.800 2.700" stroke="#6f6f6f" stroke-width="1.800" stroke-linecap="round"/>
<path d="M2 8.500c2.500-3 6.500-5.500 10.500-6 5 .5 9 5.500 10 11.500-2 2.500-6 5.500-9.500 6.500-1-1.500-2.500-2.600-4.500-3 0-3.500-2.800-7.200-6.500-9z" fill="#8d8d8d" stroke="#666" stroke-width=".8" stroke-linejoin="round"/>
<path d="M4.500 6.300c3.500.5 7 3.500 8.300 7.500.4 1.200.5 2.300.4 3.500M8 3.800c4 1.200 7.500 5 8.500 9.500.3 1.300.3 2.600.1 3.800M12.500 2.500c-1.500 3-1 6 .5 10" fill="none" stroke="#b0b0b0" stroke-width=".8"/></svg>
<svg class="ic" style="left:817px;top:119px" width="24" height="24" viewBox="0 0 24 24"><defs><linearGradient id="lf817" x1="0" y1="0" x2="1" y2="1"><stop offset="0" stop-color="#b0b0b0"/><stop offset="1" stop-color="#8f8f8f"/></linearGradient></defs>
<path d="M2.200 10.800L8.700 3.200l12.500 2.700v15.200L9.200 19.500H2.200z" fill="url(#lf817)" stroke="#7c7c7c" stroke-width=".8" stroke-linejoin="round"/>
<path d="M8.700 3.200l12.500 2.700v15.200" fill="none" stroke="#7c7c7c" stroke-width="1.800" stroke-linejoin="round"/>
<path d="M9.200 10.800L21.200 5.900M9.200 19.500l12 1.600" stroke="#7c7c7c" stroke-width=".7"/>
<rect x="2.200" y="10.800" width="7" height="8.700" fill="#8a8a8a" stroke="#7c7c7c" stroke-width="1.600"/>
<rect x="4.500" y="13.200" width="2.400" height="4" fill="#a5a5a5"/></svg>
<svg class="ic" style="left:847px;top:119px" width="24" height="24" viewBox="0 0 24 24"><defs><linearGradient id="sw847" x1="0" y1="0" x2="1" y2="1"><stop offset="0" stop-color="#b4b4b4"/><stop offset="1" stop-color="#8a8a8a"/></linearGradient></defs>
<path d="M1.500 12.900C5.500 10.500 7.500 7 8.600 2l10.800 3.900c2.200 4.400 3.200 7.300 4 11.300-4.400 3-8.600 4.300-13.600 4.700l-8.300-.2z" fill="url(#sw847)" stroke="#6a6a6a" stroke-width=".8" stroke-linejoin="round"/>
<path d="M8.600 2l10.800 3.900" stroke="#6a6a6a" stroke-width="1.800"/>
<path d="M9.700 12.900C14 11.500 17.500 9 19.400 5.900M12.500 17.500c3-1 5.500-2.500 7.500-4.500" fill="none" stroke="#6a6a6a" stroke-width=".7"/>
<rect x="1.500" y="12.900" width="8.200" height="8.800" fill="#777" stroke="#6a6a6a" stroke-width=".8"/>
<rect x="3.300" y="15.200" width="3.800" height="3.800" fill="#9a9a9a" stroke="#555" stroke-width=".6"/>
<circle cx="22.700" cy="2.600" r="1.300" fill="none" stroke="#6a6a6a" stroke-width=".9"/></svg>
<svg class="ic" style="left:879px;top:119px" width="6" height="24" viewBox="0 0 6 24"><path d="M1 21.500L8 15" stroke="#7d7d7d" stroke-width="1.700" stroke-linecap="round"/><path d="M3.500 13c1-3 2.500-4.500 4-5" fill="none" stroke="#9a9a9a" stroke-width="3"/></svg>

<!-- 3D view -->
<div id="view" class="abs">
<svg class="ic" style="left:0;top:0" width="635" height="452" viewBox="249 148 635 452">
<defs>
<linearGradient id="gL" x1="402.800" x2="458" y1="0" y2="0" gradientUnits="userSpaceOnUse"><stop offset="0" stop-color="#505050"/><stop offset=".2" stop-color="#6e6e6e"/><stop offset=".55" stop-color="#a0a0a0"/><stop offset="1" stop-color="#c4c4c4"/></linearGradient>
<linearGradient id="gF" x1="542" x2="700" y1="0" y2="0" gradientUnits="userSpaceOnUse"><stop offset="0" stop-color="#cccccc"/><stop offset=".3" stop-color="#d2d2d2"/><stop offset=".55" stop-color="#c6c6c6"/><stop offset=".8" stop-color="#a4a4a4"/><stop offset="1" stop-color="#7a7a7a"/></linearGradient>
<linearGradient id="gR" x1="792" x2="807.200" y1="0" y2="0" gradientUnits="userSpaceOnUse"><stop offset="0" stop-color="#6e6e6e"/><stop offset="1" stop-color="#4c4c4c"/></linearGradient>
</defs>
<g stroke="#0c0c0c" stroke-width="1.600" stroke-linejoin="round">
<path d="M458.0 422.4C455.7 422.0 448.7 421.1 444.0 420.2C439.3 419.3 434.3 418.3 430.0 417.2C425.7 416.1 421.2 414.8 418.0 413.6C414.8 412.4 412.6 411.3 410.5 410.0C408.4 408.7 406.7 407.1 405.5 405.8C404.3 404.6 403.6 403.5 403.2 402.5C402.8 401.5 402.9 400.4 402.8 400.0L402.8 499.0C402.9 499.3 402.8 499.9 403.2 500.6C403.6 501.3 404.3 502.1 405.5 503.2C406.7 504.3 408.4 505.8 410.5 507.0C412.6 508.2 414.8 509.4 418.0 510.6C421.2 511.8 425.7 513.2 430.0 514.4C434.3 515.6 439.3 516.7 444.0 517.6C448.7 518.5 455.7 519.6 458.0 520.0Z" fill="url(#gL)"/>
<path d="M542.0 433.2C535.0 432.3 514.0 429.6 500.0 427.8C486.0 426.0 465.0 423.3 458.0 422.4L458.0 520.0C465.0 520.9 486.0 523.7 500.0 525.5C514.0 527.3 535.0 530.1 542.0 531.0Z" fill="#c2c2c2"/>
<path d="M700.0 422.4C698.3 422.9 693.3 424.6 690.0 425.6C686.7 426.6 685.0 427.2 680.0 428.2C675.0 429.2 666.7 430.8 660.0 431.8C653.3 432.8 647.7 433.5 640.0 434.2C632.3 434.9 623.7 435.5 614.0 435.8C604.3 436.1 591.0 436.1 582.0 436.0C573.0 435.9 566.7 435.4 560.0 434.9C553.3 434.4 545.0 433.5 542.0 433.2L542.0 531.0C545.0 531.4 553.3 532.9 560.0 533.6C566.7 534.3 573.0 535.0 582.0 535.2C591.0 535.4 604.3 535.2 614.0 534.8C623.7 534.4 632.3 533.7 640.0 533.0C647.7 532.3 653.3 531.6 660.0 530.6C666.7 529.6 675.0 528.1 680.0 527.0C685.0 525.9 686.7 525.2 690.0 524.2C693.3 523.2 698.3 521.5 700.0 521.0Z" fill="url(#gF)"/>
<path d="M792.0 388.0C786.7 390.0 772.0 395.5 760.0 400.0C748.0 404.5 730.0 411.5 720.0 415.2C710.0 418.9 703.3 421.2 700.0 422.4L700.0 521.0C703.3 519.7 710.0 517.0 720.0 513.2C730.0 509.4 748.0 502.6 760.0 498.0C772.0 493.4 786.7 487.8 792.0 485.8Z" fill="#727272"/>
<path d="M807.2 376.0C807.0 376.5 807.1 378.1 806.2 379.2C805.3 380.3 804.4 381.0 802.0 382.5C799.6 384.0 793.7 387.1 792.0 388.0L792.0 485.8C793.7 485.1 799.6 482.7 802.0 481.6C804.4 480.5 805.3 479.9 806.2 479.0C807.1 478.1 807.0 476.5 807.2 476.0Z" fill="url(#gR)"/>
<path d="M402.8 400.0C402.9 399.3 402.7 397.3 403.2 396.0C403.7 394.7 404.6 393.4 406.0 392.2C407.4 391.0 409.5 389.7 411.5 388.6C413.5 387.5 414.9 386.8 418.0 385.4C421.1 384.0 424.7 382.5 430.0 380.4C435.3 378.3 443.3 375.3 450.0 372.8C456.7 370.3 463.3 367.7 470.0 365.2C476.7 362.7 483.3 360.1 490.0 357.6C496.7 355.1 504.7 352.2 510.0 350.4C515.3 348.6 518.7 347.9 522.0 347.0C525.3 346.1 525.3 346.0 530.0 345.2C534.7 344.4 543.3 342.9 550.0 342.0C556.7 341.1 563.3 340.5 570.0 340.0C576.7 339.5 582.7 339.1 590.0 338.8C597.3 338.6 605.7 338.4 614.0 338.5C622.3 338.6 629.0 338.6 640.0 339.6C651.0 340.6 666.7 342.9 680.0 344.6C693.3 346.3 706.7 348.2 720.0 350.0C733.3 351.8 750.0 353.8 760.0 355.2C770.0 356.6 775.0 357.6 780.0 358.6C785.0 359.6 787.2 360.4 790.0 361.4C792.8 362.4 794.8 363.3 797.0 364.5C799.2 365.7 801.4 367.4 803.0 368.8C804.6 370.2 805.7 371.4 806.4 372.6C807.1 373.8 807.1 375.4 807.2 376.0C807.0 376.5 807.1 378.1 806.2 379.2C805.3 380.3 804.4 381.0 802.0 382.5C799.6 384.0 799.0 385.1 792.0 388.0C785.0 390.9 772.0 395.5 760.0 400.0C748.0 404.5 730.0 411.5 720.0 415.2C710.0 418.9 705.0 420.7 700.0 422.4C695.0 424.1 693.3 424.6 690.0 425.6C686.7 426.6 685.0 427.2 680.0 428.2C675.0 429.2 666.7 430.8 660.0 431.8C653.3 432.8 647.7 433.5 640.0 434.2C632.3 434.9 623.7 435.5 614.0 435.8C604.3 436.1 591.0 436.1 582.0 436.0C573.0 435.9 566.7 435.4 560.0 434.9C553.3 434.4 552.0 434.4 542.0 433.2C532.0 432.0 514.0 429.6 500.0 427.8C486.0 426.0 467.3 423.7 458.0 422.4C448.7 421.1 448.7 421.1 444.0 420.2C439.3 419.3 434.3 418.3 430.0 417.2C425.7 416.1 421.2 414.8 418.0 413.6C414.8 412.4 412.6 411.3 410.5 410.0C408.4 408.7 406.7 407.1 405.5 405.8C404.3 404.6 403.6 403.5 403.2 402.5C402.8 401.5 402.9 400.4 402.8 400.0Z" fill="#383838"/>
</g>
</svg>
</div>

<!-- dock panel -->
<div id="dock" class="abs" style="left:0;top:148px;width:249px;height:452px;background:#f0f0f0">
<!-- header (coords relative to dock: y-148) -->
<div class="abs" style="left:2px;top:2px;width:243px;height:18px;background:#dbdbdb;border:1px solid #c2c2c2;border-top-color:#d4dede"></div>
<span class="lbl" style="left:5px;top:5px">组合浏览器</span>
<svg class="ic" style="left:230px;top:6px" width="8" height="9" viewBox="0 0 8 9" shape-rendering="crispEdges"><path d="M2 0h6v6h-2v-1h1v-3h-4v1h-1z" fill="#2a2a2a"/><path d="M0 3h6v6h-6zM1 5h4v3h-4z" fill="#2a2a2a" fill-rule="evenodd"/></svg>
<!-- tabs -->
<div class="abs" style="left:3px;top:24px;width:44px;height:22px;background:#f0f0f0;border:1px solid #d9d9d9;border-bottom:none"></div>
<div class="abs" style="left:46px;top:22px;width:70px;height:25px;background:#fff;border:1px solid #d9d9d9;border-bottom:none"></div>
<span class="lbl" style="left:12px;top:28px">模型</span>
<svg class="ic" style="left:59px;top:24px" width="18" height="18" viewBox="0 0 18 18"><path d="M1.700 5L5.500 1.600 15.700 12.200 11.900 15.200z" fill="#1f3f78"/><path d="M3 3.800l1.200-1 10.200 10.600-1.200 1z" fill="#4f78b4"/><path d="M1.700 5l1.300-1.200 10.200 10.600-1.300 .8z" fill="#16305f"/><path d="M15.700 12.200l.8 4.100-4.600-1.100z" fill="#e4e6ec" stroke="#555" stroke-width=".4"/><path d="M16.500 16.300l-1.700-.4 1.300-1.200z" fill="#1c1c2a"/></svg>
<span class="lbl" style="left:80px;top:28px">任务</span>
<!-- task area -->
<div class="abs" style="left:2px;top:45px;width:241px;height:407px;background:#fff;border-top:1px solid #e3e3e3;border-right:1px solid #e3e3e3"></div>
<div class="abs" style="left:2px;top:47px;width:239px;height:405px;border-left:1px solid #7a8a8a;background:linear-gradient(to bottom,#ababc5 0,#313163 226px,#313163 100%);border-top:1px solid #7a7f88;border-right:1px solid #7a7f88"></div>
<div class="abs" style="left:248px;top:0;width:1px;height:452px;background:#fff"></div>
<!-- OK / Cancel -->
<div class="abs mono" style="left:65px;top:66px;width:73px;height:21px;background:#e1e1e1;border:2px solid #0078d7;font-size:12px;line-height:17px;padding-top:3px;text-align:center;letter-spacing:-1.2px">OK</div>
<div class="abs mono" style="left:146px;top:67px;width:73px;height:20px;background:#e1e1e1;border:1px solid #adadad;font-size:12px;line-height:18px;padding:2px 3px 0 0;text-align:center;letter-spacing:-1.2px">Cancel</div>
<!-- task box header -->
<div class="abs" style="left:11px;top:105px;width:229px;height:25px;border-top-left-radius:5px;background:linear-gradient(to right,#ffffff 0%,#f3f6fe 30%,#c9d5f8 100%)"></div>
<svg class="ic" style="left:17px;top:109px" width="16" height="16" viewBox="0 0 16 16">
<path d="M1.200 11.300L8 8.800l6.800 2.500L8 14.600z" fill="#c4c6c8" stroke="#4a4a4a" stroke-width=".9" stroke-linejoin="round"/>
<path d="M3.800 11.400L8 9.900l4.200 1.500L8 13.300z" fill="#e4e4e4" stroke="#6a6a6a" stroke-width=".6"/>
<path d="M1.500 3.600L8 1.300l6.500 2.300v4L8 10.200 1.500 7.600z" fill="#e4c40c" stroke="#8a7405" stroke-width=".8" stroke-linejoin="round"/>
<path d="M1.500 3.600L8 5.800l6.500-2.200L8 1.300z" fill="#fbea5e" stroke="#8a7405" stroke-width=".6" stroke-linejoin="round"/>
<path d="M8 5.800v4.400" stroke="#8a7405" stroke-width=".6"/>
<path d="M8 5.800l6.500-2.200v4L8 10.200z" fill="#d1b008" opacity=".6"/>
</svg>
<span class="lbl" style="left:34px;top:111px;font-size:13px;letter-spacing:0;font-weight:bold;color:#215dc6;line-height:15px">凸台参数</span>
<!-- task box body -->
<div class="abs" style="left:11px;top:130px;width:229px;height:310px;background:#d6dff7;border:1px solid #fff;border-top:none;border-right:none"></div>
<span class="lbl" style="left:24px;top:147px">类型</span>
<div class="abs lbl" style="left:113px;top:143px;width:127px;height:20px;background:#e1e1e1;border:1px solid #adadad;border-right:none;padding:3px 0 0 3px">尺寸标注</div>
<span class="lbl" style="left:24px;top:174px">长度</span>
<div class="abs mono" style="left:113px;top:169px;width:127px;height:22px;background:#fff;border:1px solid #7a7a7a;border-right:none;font-size:12px;line-height:24px;padding-left:2px;letter-spacing:-1.2px">10.00 mm</div>
<svg class="ic" style="left:228px;top:170px" width="11" height="11" viewBox="0 0 11 11"><circle cx="5.500" cy="5.500" r="4.700" fill="#f1f3f4" stroke="#5c88c4" stroke-width="1.200"/><path d="M2.400 7.600L4.200 3.200l1.300 3.600L7.200 3.200l1.600 4.400" fill="none" stroke="#3f70b8" stroke-width="1.200"/></svg>
<!-- group box -->
<div class="abs" style="left:25px;top:207px;width:215px;height:88px;border:1px solid #c3c3c8;border-right:none;border-radius:3px 0 0 3px"></div>
<span class="lbl" style="left:38px;top:201px;background:#d6dff7;padding:0 4px">方向</span>
<span class="lbl" style="left:36px;top:223px">方向<span style="padding:0 1px 0 2px">/</span>边缘<span style="padding-left:2px">:</span></span>
<div class="abs lbl" style="left:109px;top:219px;width:131px;height:20px;background:#e1e1e1;border:1px solid #adadad;border-right:none;padding:3px 0 0 3px">草图法向</div>
<svg class="ic" style="left:230px;top:226px" width="10" height="6" viewBox="0 0 10 6"><path d="M.5.500l4.500 4.500 4.500-4.500" fill="none" stroke="#444" stroke-width="1.100"/></svg>
<div class="cb" style="left:37px;top:246px"></div>
<span class="lbl" style="left:55px;top:247px">显示方向</span>
<div class="cb" style="left:37px;top:268px"></div>
<svg class="ic" style="left:38px;top:269px" width="11" height="11" viewBox="0 0 11 11"><path d="M1.500 5.500l2.700 2.800L9.500 2.500" fill="none" stroke="#222" stroke-width="1.300"/></svg>
<span class="lbl" style="left:55px;top:269px">沿草图法线长度<span style="padding-left:2px">:</span></span>
<div class="cb" style="left:25px;top:302px"></div>
<span class="lbl" style="left:42px;top:303px">相当平面对称</span>
<div class="cb" style="left:25px;top:324px"></div>
<span class="lbl" style="left:42px;top:325px">反转</span>
<span class="lbl" style="left:24px;top:350px">锥度</span>
<div class="abs mono" style="left:145px;top:345px;width:95px;height:22px;background:#fff;border:1px solid #7a7a7a;border-right:none;font-size:12px;line-height:24px;padding-left:2px;letter-spacing:-1.2px">0.00 °</div>
<svg class="ic" style="left:228px;top:346px" width="11" height="11" viewBox="0 0 11 11"><circle cx="5.500" cy="5.500" r="4.700" fill="#f1f3f4" stroke="#5c88c4" stroke-width="1.200"/><path d="M2.400 7.600L4.200 3.200l1.300 3.600L7.200 3.200l1.600 4.400" fill="none" stroke="#3f70b8" stroke-width="1.200"/></svg>
<div class="abs mono" style="left:26px;top:374px;width:83px;height:20px;background:#cccccc;border:1px solid #bfbfbf;font-size:12px;line-height:18px;padding:1px 2px 0 0;text-align:center;letter-spacing:-1.2px;color:#8f8f8f">Select face</div>
<div class="abs lbl" style="left:116px;top:374px;width:124px;height:20px;background:#e6e6ea;border:1px solid #c6c6cc;border-right:none;padding:3px 0 0 1px;color:#8b8b8b">未选择任何面</div>
<div class="abs" style="left:25px;top:401px;width:215px;height:1px;background:#a0a0a0"></div>
<div class="abs" style="left:25px;top:402px;width:215px;height:1px;background:#fff"></div>
<div class="cb" style="left:25px;top:411px"></div>
<svg class="ic" style="left:26px;top:412px" width="11" height="11" viewBox="0 0 11 11"><path d="M1.500 5.500l2.700 2.800L9.500 2.500" fill="none" stroke="#222" stroke-width="1.300"/></svg>
<span class="lbl" style="left:42px;top:412px">更新视图</span>
</div>

<!-- tooltip -->
<div class="abs" style="left:537px;top:147px;width:132px;height:69px;background:#fff;border:1px solid #767676;box-shadow:3px 3px 2px rgba(0,0,0,.5)">
<span class="lbl" style="left:5px;top:3px;font-size:13.500px;font-weight:bold;color:#333;line-height:15px">凸台</span>
<span class="lbl" style="left:5px;top:34px;font-size:12px;color:#575757">基于选定草图创建凸台</span>
<span class="lbl" style="left:5px;top:51px;font-size:12px;letter-spacing:.25px;color:#575757;font-style:italic">(PartDesign_Pad)</span>
</div>
<!-- annotations -->
<div class="red" style="left:-1px;top:147px;width:290px;height:452px"></div>
<div class="red" style="left:505px;top:81px;width:206px;height:172px;border-radius:3px 3px 2px 3px"></div>
</body>
</html>
